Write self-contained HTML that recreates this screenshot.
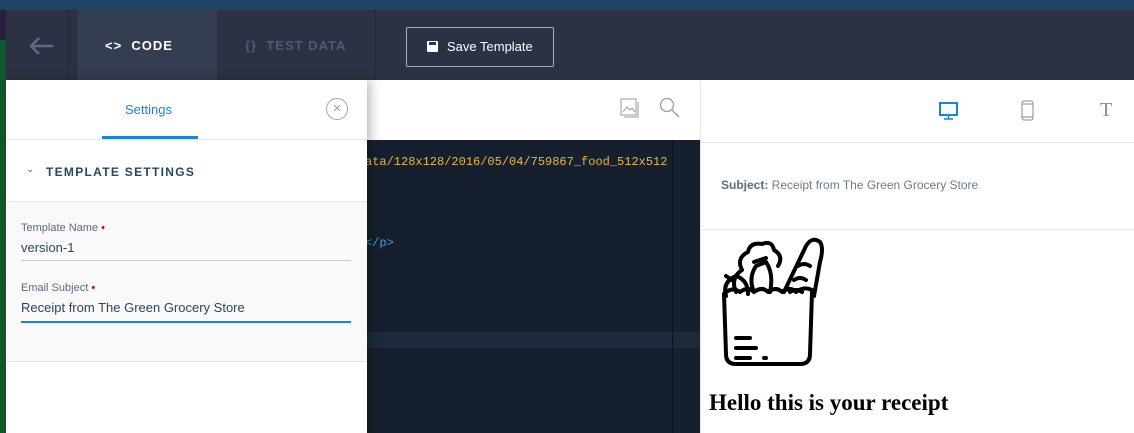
<!DOCTYPE html>
<html><head><style>
*{margin:0;padding:0;box-sizing:border-box}
body{width:1134px;height:433px;overflow:hidden;position:relative;font-family:"Liberation Sans",sans-serif;background:#fff}
.a{position:absolute}
</style></head><body>
<div class="a" style="left:0;top:0;width:1134px;height:10px;background:#1f4466"></div>
<div class="a" style="left:0;top:10px;width:1134px;height:70px;background:#2c3243"></div>
<div class="a" style="left:0;top:10px;width:6px;height:423px;background:#0d5a2c"></div>
<div class="a" style="left:0;top:10px;width:6px;height:30px;background:#2a1f3d"></div>
<svg class="a" style="left:28px;top:36px" width="26" height="20"><path d="M25 10H3M11 2L3 10l8 8" stroke="#5b6d86" stroke-width="2.5" fill="none"/></svg>
<div class="a" style="left:68px;top:10px;width:1px;height:70px;background:#22283a"></div>
<div class="a" style="left:78px;top:10px;width:139px;height:70px;background:#353e51"></div>
<div class="a" style="left:105px;top:38px;color:#fff;font-weight:bold;font-size:13px;letter-spacing:1px">&lt;&gt;&nbsp; CODE</div>
<div class="a" style="left:245px;top:38px;color:#4b5c74;font-weight:bold;font-size:13px;letter-spacing:1px">{}&nbsp; TEST DATA</div>
<div class="a" style="left:375px;top:10px;width:1px;height:70px;background:#22283a"></div>
<div class="a" style="left:406px;top:27px;width:148px;height:40px;border:1px solid #aab;border-radius:2px;color:#fff;font-size:13px;line-height:38px;padding-left:40px">Save Template</div>
<div class="a" style="left:427px;top:41px;width:11px;height:11px;background:#fff;border-radius:1px"></div>
<div class="a" style="left:429px;top:42px;width:7px;height:3px;background:#2c3243"></div>
<div class="a" style="left:367px;top:80px;width:333px;height:60px;background:#fff"></div>
<div class="a" style="left:367px;top:140px;width:333px;height:293px;background:#161f2d"></div>
<div class="a" style="left:367px;top:332px;width:333px;height:16px;background:#1c2a3b"></div>
<div class="a" style="left:672px;top:140px;width:1px;height:293px;background:#0c121b"></div>
<div class="a" style="left:365px;top:155px;color:#e8b93a;font-family:'Liberation Mono',monospace;font-size:12px">ata/128x128/2016/05/04/759867_food_512x512</div>
<div class="a" style="left:365px;top:236px;color:#4a9ce0;font-family:'Liberation Mono',monospace;font-size:12px">&lt;/p&gt;</div>
<svg class="a" style="left:620px;top:98px" width="20" height="20"><rect x="1" y="1" width="15" height="16" fill="none" stroke="#99a"/><path d="M3 14l4-5 3 3 2-2 3 4" stroke="#99a" fill="none"/><path d="M18 4v15H4" stroke="#99a" fill="none"/></svg>
<svg class="a" style="left:659px;top:97px" width="22" height="22"><circle cx="8" cy="8" r="6.5" stroke="#99a" fill="none" stroke-width="1.3"/><path d="M13 13l7 7" stroke="#99a" stroke-width="1.3"/></svg>
<div class="a" style="left:700px;top:80px;width:1px;height:353px;background:#e3e6ea"></div>
<div class="a" style="left:700px;top:142px;width:434px;height:1px;background:#e3e6ea"></div>
<div class="a" style="left:700px;top:229px;width:434px;height:1px;background:#e3e6ea"></div>
<svg class="a" style="left:938px;top:101px" width="22" height="20"><rect x="2" y="2" width="17" height="12" stroke="#1a82e2" stroke-width="2" fill="none"/><path d="M10.5 14v4M6 18h9" stroke="#1a82e2" stroke-width="1.5"/></svg>
<svg class="a" style="left:1020px;top:99px" width="16" height="24"><rect x="2" y="2" width="11" height="19" rx="2" stroke="#889" fill="none"/><path d="M2 5h11M2 18h11" stroke="#889"/></svg>
<div class="a" style="left:1100px;top:99px;color:#889;font-family:'Liberation Serif',serif;font-size:20px">T</div>
<div class="a" style="left:721px;top:178px;font-size:12px;color:#6b7a8d"><b style="color:#5a6a80">Subject:</b> Receipt from The Green Grocery Store</div>
<svg class="a" style="left:718px;top:236px" width="110" height="134" fill="none" stroke="#000" stroke-width="4" stroke-linecap="round" stroke-linejoin="round">
<path d="M6 58l2 60q0 10 10 10h64q10 0 10-10l2-62"/>
<path d="M6 58q8-8 16-2q8-6 14 0q8-6 14 0q8-6 14 0q8-6 14 0q8-6 16-2"/>
<path d="M66 56l22-46q6-10 14-4q4 6 0 20l-6 34"/>
<path d="M80 30q6-4 12 0M76 44q6-4 12 0M72 56q6-4 12 0"/>
<path d="M18 56q-6-14 6-22q-6-12 6-18q2-10 14-8q10-4 12 6q10 6 4 16"/>
<path d="M36 56q-6-14 2-26l10-4q8 12 4 30"/>
<path d="M36 26l12-4"/>
<path d="M8 60q-4-14 10-20q12 4 12 18"/>
<path d="M8 40l6 4"/>
<path d="M18 102h14M18 112h20M18 122h14M46 122h2"/>
</svg>
<div class="a" style="left:709px;top:390px;font-family:'Liberation Serif',serif;font-weight:bold;font-size:23px;color:#000">Hello this is your receipt</div>
<div class="a" style="left:6px;top:80px;width:361px;height:353px;background:#fff;box-shadow:4px 0 10px rgba(0,0,0,.25)"></div>
<div class="a" style="left:6px;top:139px;width:361px;height:1px;background:#e3e6ea"></div>
<div class="a" style="left:102px;top:136px;width:96px;height:3px;background:#1a82e2"></div>
<div class="a" style="left:125px;top:102px;color:#1a82e2;font-size:13px">Settings</div>
<div class="a" style="left:326px;top:98px;width:22px;height:22px;border:1px solid #9aa3b0;border-radius:50%;color:#9aa3b0;font-size:15px;line-height:19px;text-align:center">×</div>
<div class="a" style="left:26px;top:164px;color:#5a6a80;font-size:10px">⌄</div>
<div class="a" style="left:46px;top:165px;color:#294661;font-weight:bold;font-size:12px;letter-spacing:1.3px">TEMPLATE SETTINGS</div>
<div class="a" style="left:6px;top:201px;width:361px;height:161px;background:#f9f9fa;border-top:1px solid #e3e6ea;border-bottom:1px solid #e3e6ea"></div>
<div class="a" style="left:21px;top:222px;color:#5a6a80;font-size:11px">Template Name <span style="color:#c00">•</span></div>
<div class="a" style="left:21px;top:240px;color:#294661;font-size:13px">version-1</div>
<div class="a" style="left:21px;top:260px;width:330px;height:1px;background:#ccc"></div>
<div class="a" style="left:21px;top:282px;color:#5a6a80;font-size:11px">Email Subject <span style="color:#c00">•</span></div>
<div class="a" style="left:21px;top:300px;color:#294661;font-size:13px">Receipt from The Green Grocery Store</div>
<div class="a" style="left:21px;top:321px;width:330px;height:2px;background:#1a82e2"></div>
</body></html>
